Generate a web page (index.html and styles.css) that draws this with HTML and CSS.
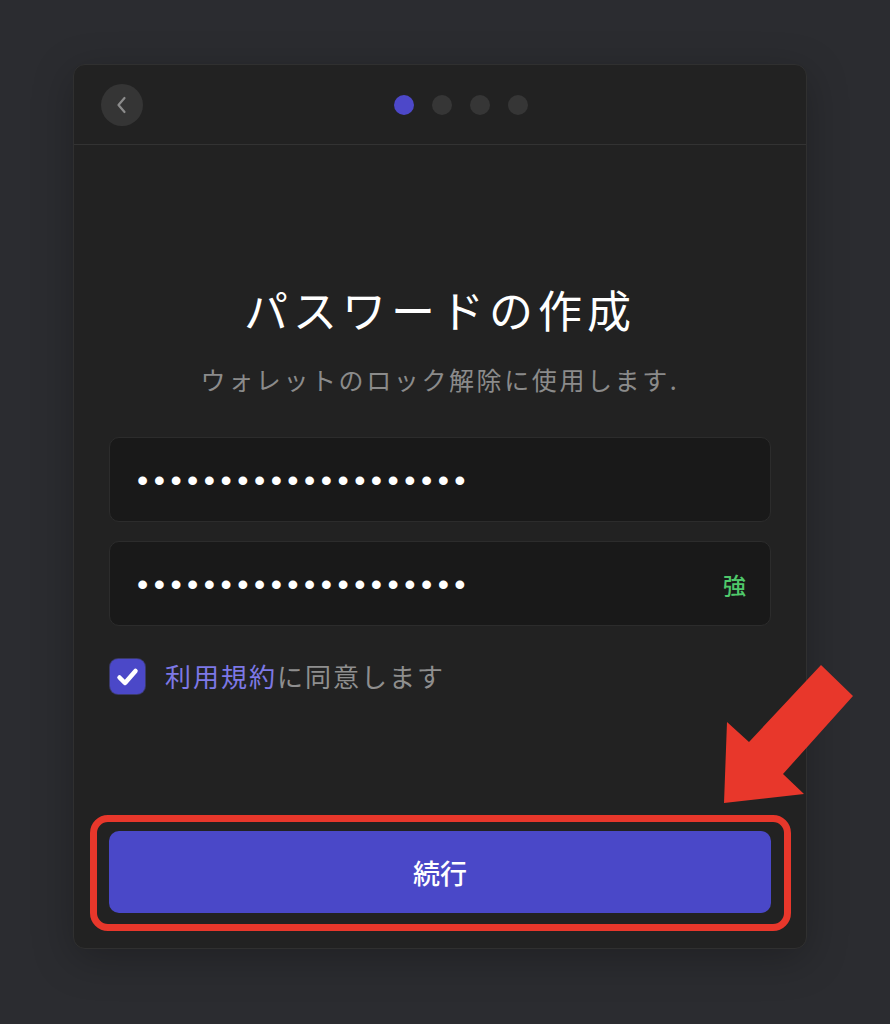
FILE: index.html
```html
<!DOCTYPE html>
<html lang="ja">
<head>
<meta charset="utf-8">
<title>パスワードの作成</title>
<link rel="stylesheet" href="styles.css">
</head>
<body>
<div class="stage">
  <div class="card">
    <header class="card-header">
      <button class="back-btn" aria-label="戻る">
        <svg width="42" height="42" viewBox="0 0 42 42"><path d="M23.5 14 L17.5 21 L23.5 28" fill="none" stroke="#8c8c8c" stroke-width="2.2" stroke-linecap="round" stroke-linejoin="round"/></svg>
      </button>
      <div class="steps">
        <span class="step active"></span>
        <span class="step"></span>
        <span class="step"></span>
        <span class="step"></span>
      </div>
    </header>
    <main class="card-body">
      <h1 class="title">パスワードの作成</h1>
      <p class="subtitle">ウォレットのロック解除に使用します.</p>
      <div class="field"><span class="dots">••••••••••••••••••••</span></div>
      <div class="field"><span class="dots">••••••••••••••••••••</span><span class="strength">強</span></div>
      <label class="agree">
        <span class="checkbox">
          <svg width="35" height="35" viewBox="0 0 35 35"><path d="M9.5 18.5 L15 24 L25.5 12" fill="none" stroke="#fff" stroke-width="4.5" stroke-linecap="round" stroke-linejoin="round"/></svg>
        </span>
        <span class="agree-text"><span class="link">利用規約</span>に同意します</span>
      </label>
      <div class="actions">
        <button class="continue">続行</button>
      </div>
    </main>
  </div>
  <svg class="arrow" width="890" height="1024" viewBox="0 0 890 1024"><polygon points="724,803 727,722 749,742 821,665 853,696 783,774 804,794" fill="#e8372b"/></svg>
</div>
</body>
</html>
```
FILE: styles.css
```css
* { box-sizing: border-box; }
html, body { margin: 0; padding: 0; }
body {
  background: #2b2c30;
  font-family: "Noto Sans CJK JP", "Noto Sans", sans-serif;
  width: 890px;
  height: 1024px;
  overflow: hidden;
}
.stage {
  position: relative;
  width: 890px;
  height: 1024px;
  padding: 64px 0 0 73px;
}
.card {
  width: 734px;
  height: 885px;
  background: #222222;
  border: 1px solid #303030;
  border-radius: 12px;
  box-shadow: 0 10px 40px rgba(0,0,0,0.25);
  display: flex;
  flex-direction: column;
}
.card-header {
  height: 80px;
  border-bottom: 1px solid #333333;
  display: flex;
  align-items: center;
  padding: 0 27px;
  flex-shrink: 0;
}
.back-btn {
  width: 42px;
  height: 42px;
  border-radius: 50%;
  background: #353535;
  border: none;
  padding: 0;
  display: flex;
  align-items: center;
  justify-content: center;
}
.back-btn svg { display: block; }
.steps {
  flex: 1;
  display: flex;
  justify-content: center;
  gap: 18px;
}
.step {
  width: 20px;
  height: 20px;
  border-radius: 50%;
  background: #363636;
}
.step.active { background: #4d48c9; }
.card-body {
  flex: 1;
  display: flex;
  flex-direction: column;
  padding: 136px 35px 35px 35px;
}
.title {
  margin: 0;
  text-align: center;
  color: #ffffff;
  font-size: 44px;
  font-weight: 400;
  letter-spacing: 5px;
  line-height: 56px;
}
.subtitle {
  margin: 24px 0 0;
  text-align: center;
  color: #8b8b8b;
  font-size: 25px;
  letter-spacing: 2.6px;
  line-height: 36px;
}
.field {
  margin-top: 40px;
  height: 85px;
  background: #191919;
  border: 1px solid #2c2c2c;
  border-radius: 10px;
  display: flex;
  align-items: center;
  justify-content: space-between;
  padding: 0 24px 0 27px;
}
.field + .field { margin-top: 19px; }
.dots {
  font-family: "Liberation Sans", sans-serif;
  color: #ffffff;
  font-size: 32px;
  letter-spacing: 5.5px;
  line-height: 30px;
}
.strength {
  color: #4fc86a;
  font-size: 23px;
  font-weight: 500;
}
.agree {
  margin-top: 32px;
  display: flex;
  align-items: center;
  gap: 20px;
  padding-left: 1px;
}
.checkbox {
  width: 35px;
  height: 35px;
  border-radius: 8px;
  background: #4b48c8;
  box-shadow: 0 0 0 1px #3a3a6a;
  display: block;
}
.checkbox svg { display: block; }
.agree-text {
  color: #8f8f8f;
  font-size: 26px;
  letter-spacing: 2px;
  line-height: 36px;
}
.link { color: #7d78e6; }
.actions {
  margin-top: auto;
  position: relative;
}
.actions::after {
  content: "";
  position: absolute;
  top: -16px;
  bottom: -18px;
  left: -19px;
  right: -20px;
  border: 7px solid #e8372b;
  border-radius: 18px;
  pointer-events: none;
}
.continue {
  width: 100%;
  height: 82px;
  border: none;
  border-radius: 10px;
  background: #4a48c8;
  color: #ffffff;
  font-family: "Noto Sans CJK JP", sans-serif;
  font-size: 27px;
  font-weight: 500;
  display: block;
}
.arrow {
  position: absolute;
  left: 0;
  top: 0;
  pointer-events: none;
}
```
